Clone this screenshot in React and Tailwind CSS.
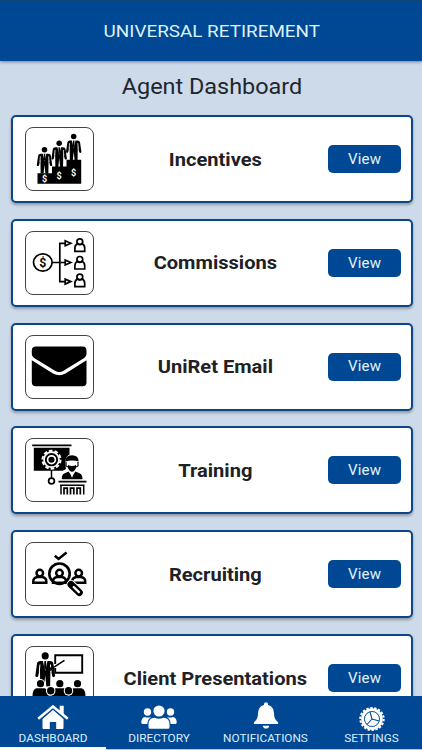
function Businessman({ x, y, h = 24 }) {
  return (
    <g transform={`translate(${x} ${y}) scale(${h / 24})`}>
      <circle cx="0" cy="-21.600" r="2.500" />
      <path d="M-3.500-18h7q2 0 2.300 2L7-7.500q-.8 1.500-2 .2L3.700-13 3.500 0H.8L0-8-.8 0h-2.700l-.2-13L-5-7.300q-1.200 1.300-2-.2l1.200-8.500q.3-2 2.300-2z" />
      <path d="M-1.700-18.300 0-11l1.700-7.300z" fill="#fff" />
      <path d="M-.6-18h1.200L.8-13 0-11.700-.8-13z" />
      <path d="m-3.700-15.500-.5 5M3.700-15.500l.5 5" stroke="#fff" strokeWidth=".7" />
    </g>
  )
}

function IncentivesIcon() {
  return (
    <svg viewBox="0 0 69 64" className="h-full w-full">
      <path d="M12.500 56.700V46.200H27v-6.700h14.500v-6.700h14.700v23.900z" />
      <Businessman x={19.5} y={46.5} h={26.5} />
      <Businessman x={34.2} y={40} h={26.5} />
      <Businessman x={48.7} y={33.3} h={26.5} />
      <g fill="#fff" fontSize="9" fontWeight="700" textAnchor="middle" fontFamily="Roboto">
        <text x="19.500" y="54.600">$</text>
        <text x="34.200" y="51.500">$</text>
        <text x="48.700" y="48.500">$</text>
      </g>
    </svg>
  )
}

function CommissionsIcon() {
  return (
    <svg viewBox="0 0 69 64" className="h-full w-full">
      <g fill="none" stroke="#000" strokeWidth="1.700">
        <ellipse cx="17.800" cy="31.500" rx="9.300" ry="8.600" />
        <path d="M27.200 31.500h13M40.200 12.300h-5.400v38.300h5.400" />
        {[12.3, 31.5, 50.6].map((y) => (
          <path key={y} d={`M40.200 ${y - 2.5}v5l5.600-2.500z`} />
        ))}
        {[20.3, 38, 55.6].map((y) => (
          <g key={y} transform={`translate(54.800 ${y})`}>
            <circle cx="0" cy="-9.600" r="2.900" />
            <path d="M-4.900 0v-3.500q.2-3.500 3-4.200Q0-6.200 1.900-7.700q2.800.7 3 4.200V0z" />
          </g>
        ))}
      </g>
      <text x="17.800" y="36" fontSize="12.500" fontWeight="600" textAnchor="middle" fontFamily="Roboto">$</text>
    </svg>
  )
}

function EmailIcon() {
  return (
    <svg viewBox="0 0 69 64" className="h-full w-full">
      <path d="M11 11.600h46.500q4 0 4 4v3.400q0 2.500-2.300 4L38.500 35.700q-4.200 2.600-8.500 0L9.100 23q-2.300-1.500-2.300-4v-3.400q0-4 4.200-4z" />
      <path d="M6.800 25.300 28 38.500q6.300 3.400 12.500 0l21-13.200v22q0 4-4 4H11q-4.200 0-4.200-4z" />
    </svg>
  )
}

function TrainingIcon() {
  return (
    <svg viewBox="0 0 69 64" className="h-full w-full">
      <path d="M7.200 6.600h39.300v1.600H7.200zM8.800 9.700h35.700v23H8.800z" />
      <g fill="none" stroke="#fff">
        <circle cx="26.500" cy="21.700" r="7.500" strokeWidth="1.700" />
        <circle cx="26.500" cy="21.700" r="9" strokeWidth="2" strokeDasharray="3.600 2.050" />
        <circle cx="26.500" cy="21.700" r="3.900" strokeWidth="1.700" />
      </g>
      <path d="M26.500 32v8" stroke="#000" strokeWidth="1.500" />
      <circle cx="26.500" cy="43" r="2.900" fill="none" stroke="#000" strokeWidth="1.700" />
      <path d="M36 34q3-2 5-3-3-14 6-15 9 0 7 15v5H36z" fill="#fff" />
      <path d="M40.300 23.500q.2-6.300 6.700-6.300t6.700 6.300q-6.700-2-13.400 0z" />
      <path d="M41 24v4l2 1M53 24v4l-2 1" fill="none" stroke="#000" strokeWidth="1.200" />
      <path d="M43 27q4 2 8 0v3q-1.500 3.700-4 3.700T43 30z" />
      <path d="M36.800 41.300q-.3-5 3-6l3.700-1.700L47 38l3.500-4.400 4 1.700q3 1 3 6z" />
      <path d="m44.700 34 2.300 6 2.300-6" fill="#fff" />
      <path d="M33.500 42.800h28v1.800h-28z" />
      <g fill="none" stroke="#000" strokeWidth="1.500">
        <path d="M35 47.300h24.500M36 47v9.500M58.700 47v9.500" />
        <path d="M39 56.500v-6.300h3.300v6.300M45.500 56.500v-6.300h3.300v6.300M52 56.500v-6.300h3.300v6.300" strokeWidth="1.700" />
      </g>
    </svg>
  )
}

function RecruitingIcon() {
  return (
    <svg viewBox="0 0 69 64" className="h-full w-full">
      <path d="m29.800 13.700 3.800 3.200 8-6.400" fill="none" stroke="#000" strokeWidth="2.600" />
      <g fill="none" stroke="#000" strokeWidth="2.500">
        {[14.8, 34.5, 53.7].map((x) => (
          <g key={x} transform={`translate(${x} 40.700)`}>
            <circle cx="0" cy="-9.600" r="3.300" />
            <path d="M-6.500 0v-1.500q0-3.300 4-4.200h5q4 .9 4 4.200V0z" />
          </g>
        ))}
        <circle cx="34.500" cy="31.700" r="10.200" strokeWidth="2.600" />
        <path d="m41.500 38.500 3 3" />
      </g>
      <path d="m46 42.500 8.300 8" stroke="#fff" strokeWidth="9" strokeLinecap="round" />
      <path d="m46 42.500 8.300 8" stroke="#000" strokeWidth="7" strokeLinecap="round" />
      <path d="m48.700 45 5.200 5.100" stroke="#fff" strokeWidth="2.300" strokeLinecap="round" />
    </svg>
  )
}

function PresentationsIcon() {
  return (
    <svg viewBox="0 0 69 64" className="h-full w-full">
      <Businessman x={20.2} y={40.5} h={34} />
      <path d="M30.200 18V9.200h27v17.500h-27V22" fill="none" stroke="#000" strokeWidth="1.900" />
      <path d="m24 23.500 5-1.300" stroke="#000" strokeWidth="3" />
      <path d="m29 21.200 10.500-6.900" stroke="#000" strokeWidth="1.500" />
      {[15.5, 34.8, 52.5].map((x) => (
        <g key={x} transform={`translate(${x} 37.700)`}>
          <circle cx="0" cy="0" r="4.600" fill="#fff" />
          <circle cx="0" cy="0" r="3.600" />
          <path d="M-8 13q0-8 4-8.500h8q4 .5 4 8.500z" />
        </g>
      ))}
      {[25.7, 43.5].map((x) => (
        <g key={x} transform={`translate(${x} 44.800)`}>
          <circle cx="0" cy="0" r="4.800" fill="#fff" />
          <circle cx="0" cy="0" r="3.700" />
          <path d="M-7 14q0-8 4-9h6q4 1 4 9z" />
        </g>
      ))}
    </svg>
  )
}

function HomeIcon() {
  return (
    <svg viewBox="0 0 32 24" className="h-6 w-8" fill="currentColor">
      <path d="M16 4.800 26.500 14v9q0 1-1 1h-6.300v-7h-6.400v7H6.500q-1 0-1-1v-9z" />
      <path d="M1 14.200 16 1.700l15 12.500" fill="none" stroke="#004893" strokeWidth="4.500" />
      <path d="M22.700.8h4v10l-4-3.500z" />
      <path d="M1.200 13.700 16 1.500l14.800 12.200" fill="none" stroke="currentColor" strokeWidth="2.600" />
    </svg>
  )
}

function DirectoryIcon() {
  return (
    <svg viewBox="0 0 36 24" className="h-6 w-9" fill="currentColor">
      <circle cx="18" cy="6" r="5.600" />
      <circle cx="6.500" cy="7" r="3.700" />
      <circle cx="29.500" cy="7" r="3.700" />
      <path d="M9 23.700q-1.500 0-1.500-1.500v-2.700q0-6.500 6-6.700 4.500 2 9 0 6 .2 6 6.700v2.700q0 1.500-1.500 1.500z" />
      <path d="M.3 17.500q0-5 3.700-5.500 2.500 1.200 6 0-3.500 2.500-3.700 7H2q-1.700 0-1.700-1.500zM35.700 17.500q0-5-3.700-5.500-2.500 1.200-6 0 3.500 2.500 3.700 7H34q1.700 0 1.700-1.500z" />
    </svg>
  )
}

function BellIcon() {
  return (
    <svg viewBox="0 0 26 27" className="h-[27px] w-[26px]" fill="currentColor">
      <path d="M11 3V2q0-1.800 2-1.800T15 2v1q6 1.500 6 8.500 0 5.500 3.300 8 1.200 1 .8 2.500H.9q-.4-1.500.8-2.500 3.300-2.500 3.300-8Q5 4.500 11 3z" />
      <path d="M9.700 23.700h6.600Q15.700 26.500 13 26.500t-3.300-2.800z" />
    </svg>
  )
}

function SettingsIcon() {
  return (
    <svg viewBox="0 0 26 24" className="-mb-[2px] h-6 w-[26px]" fill="none" stroke="currentColor">
      <ellipse cx="13" cy="12" rx="11.700" ry="11" strokeWidth="2" strokeDasharray="2.400 1.550" />
      <circle cx="13" cy="12" r="9.300" strokeWidth="3" />
      <circle cx="13" cy="12" r="7.500" fill="currentColor" stroke="#004893" strokeWidth=".8" />
      <path d="M13 12 11 5M13 12l7 2M13 12l-5 5.500" stroke="#004893" strokeWidth="1.100" />
    </svg>
  )
}

const cards = [
  { title: "Incentives", Icon: IncentivesIcon },
  { title: "Commissions", Icon: CommissionsIcon },
  { title: "UniRet Email", Icon: EmailIcon },
  { title: "Training", Icon: TrainingIcon },
  { title: "Recruiting", Icon: RecruitingIcon },
  { title: "Client Presentations", Icon: PresentationsIcon },
]

const tabs = [
  { label: "DASHBOARD", Icon: HomeIcon, active: true },
  { label: "DIRECTORY", Icon: DirectoryIcon },
  { label: "NOTIFICATIONS", Icon: BellIcon },
  { label: "SETTINGS", Icon: SettingsIcon },
]

function Card({ title, Icon }) {
  return (
    <div className="flex h-[88px] shrink-0 items-center rounded-[5px] border-2 border-[#0b4686] bg-white pr-[10px] pl-3 shadow-[0_2px_3px_rgba(0,0,0,0.3)]">
      <div className="h-16 w-[69px] shrink-0 overflow-hidden rounded-[8px] outline outline-1 -outline-offset-1 outline-[#444]">
        <Icon />
      </div>
      <h2 className="min-w-0 flex-1 scale-x-[1.085] pt-[3px] pl-[8px] text-center text-[18.5px] font-bold whitespace-nowrap text-[#202125]">
        {title}
      </h2>
      <button className="h-7 w-[73px] shrink-0 rounded-[5px] bg-[#004893] text-[15px] tracking-[0.2px] text-[#e4f1fb]">
        View
      </button>
    </div>
  )
}

export default function App() {
  return (
    <div className="flex h-[750px] w-[422px] flex-col overflow-hidden bg-[#cddaea] font-['Roboto',sans-serif]">
      <header className="z-10 flex h-[61px] shrink-0 items-center justify-center border-t border-[#104878] bg-[#004893] shadow-[0_1px_3px_rgba(0,40,90,0.5)]">
        <span className="scale-x-[1.085] pl-px text-[17.4px] text-[#dcf2fc]">UNIVERSAL RETIREMENT</span>
      </header>

      <main className="flex min-h-0 flex-1 flex-col overflow-hidden pr-[9px] pl-[11px]">
        <h1 className="mt-[9px] h-[45px] shrink-0 scale-x-[1.085] pt-px text-center text-[21.6px] leading-[31px] text-[#20262e]">
          Agent Dashboard
        </h1>
        <div className="flex flex-col gap-[15.800px]">
          {cards.map((card) => (
            <Card key={card.title} {...card} />
          ))}
        </div>
      </main>

      <nav className="grid h-[54px] shrink-0 grid-cols-[106px_106px_107px_103px] bg-[#004893]">
        {tabs.map(({ label, Icon, active }) => (
          <div
            key={label}
            className={
              active
                ? "flex flex-col items-center justify-end border-b-[3px] border-white text-white"
                : "flex flex-col items-center justify-end border-b border-[#a8cde9] pb-0.5 text-white last:pl-[2px]"
            }
          >
            <Icon />
            <span className="text-[11.8px] leading-[18px] text-[#d9efff]">{label}</span>
          </div>
        ))}
      </nav>
    </div>
  )
}
